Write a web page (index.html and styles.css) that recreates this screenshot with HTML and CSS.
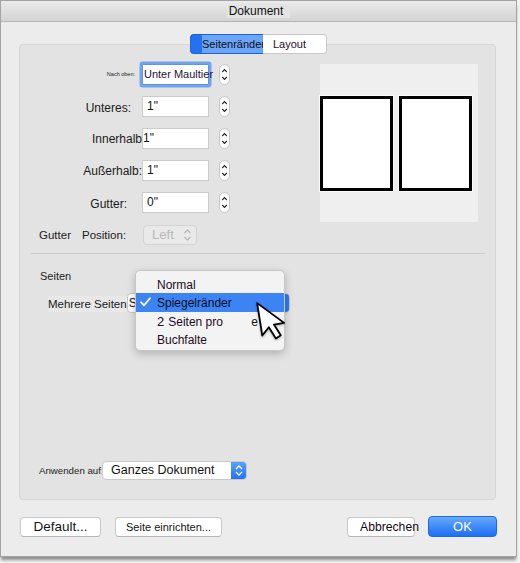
FILE: index.html
```html
<!DOCTYPE html>
<html lang="de">
<head>
<meta charset="utf-8">
<title>Dokument</title>
<link rel="stylesheet" href="styles.css">
</head>
<body>
<div class="window">
  <header class="titlebar"><span class="title">Dokument</span></header>
  <main class="content">
    <nav class="tabs">
      <span class="tab tab-active"><span class="tab-label">Seitenränder</span></span>
      <span class="tab tab-plain">Layout</span>
    </nav>

    <section class="panel">
      <div class="margins">
        <div class="fields">
          <div class="field">
            <span class="label label-top">Nach oben:</span>
            <span class="input input-focus">Unter Maultier</span>
            <svg class="stepper" viewBox="0 0 11 21" width="11" height="21"><rect x="0.5" y="0.5" width="10" height="20" rx="5" fill="#fff" stroke="#c4c4c4"/><polyline points="3.2,8 5.5,5.6 7.8,8" fill="none" stroke="#262626" stroke-width="1.1"/><polyline points="3.2,13 5.5,15.4 7.8,13" fill="none" stroke="#262626" stroke-width="1.1"/></svg>
          </div>
          <div class="field">
            <span class="label label-bottom">Unteres:</span>
            <span class="input">1"</span>
            <svg class="stepper" viewBox="0 0 11 21" width="11" height="21"><rect x="0.5" y="0.5" width="10" height="20" rx="5" fill="#fff" stroke="#c4c4c4"/><polyline points="3.2,8 5.5,5.6 7.8,8" fill="none" stroke="#262626" stroke-width="1.1"/><polyline points="3.2,13 5.5,15.4 7.8,13" fill="none" stroke="#262626" stroke-width="1.1"/></svg>
          </div>
          <div class="field">
            <span class="label">Innerhalb</span>
            <span class="input input-flush">1"</span>
            <svg class="stepper" viewBox="0 0 11 21" width="11" height="21"><rect x="0.5" y="0.5" width="10" height="20" rx="5" fill="#fff" stroke="#c4c4c4"/><polyline points="3.2,8 5.5,5.6 7.8,8" fill="none" stroke="#262626" stroke-width="1.1"/><polyline points="3.2,13 5.5,15.4 7.8,13" fill="none" stroke="#262626" stroke-width="1.1"/></svg>
          </div>
          <div class="field">
            <span class="label">Außerhalb:</span>
            <span class="input">1"</span>
            <svg class="stepper" viewBox="0 0 11 21" width="11" height="21"><rect x="0.5" y="0.5" width="10" height="20" rx="5" fill="#fff" stroke="#c4c4c4"/><polyline points="3.2,8 5.5,5.6 7.8,8" fill="none" stroke="#262626" stroke-width="1.1"/><polyline points="3.2,13 5.5,15.4 7.8,13" fill="none" stroke="#262626" stroke-width="1.1"/></svg>
          </div>
          <div class="field">
            <span class="label label-gutter">Gutter:</span>
            <span class="input">0"</span>
            <svg class="stepper" viewBox="0 0 11 21" width="11" height="21"><rect x="0.5" y="0.5" width="10" height="20" rx="5" fill="#fff" stroke="#c4c4c4"/><polyline points="3.2,8 5.5,5.6 7.8,8" fill="none" stroke="#262626" stroke-width="1.1"/><polyline points="3.2,13 5.5,15.4 7.8,13" fill="none" stroke="#262626" stroke-width="1.1"/></svg>
          </div>
          <div class="field">
            <span class="gutter-word">Gutter</span>
            <span class="gutter-pos">Position:</span>
            <span class="select-off">
              <span class="select-off-text">Left</span>
              <svg viewBox="0 0 9 14" width="9" height="14"><polyline points="1.5,5 4.5,2 7.5,5" fill="none" stroke="#b4b4b4" stroke-width="1.2"/><polyline points="1.5,9 4.5,12 7.5,9" fill="none" stroke="#b4b4b4" stroke-width="1.2"/></svg>
            </span>
          </div>
        </div>

        <div class="preview">
          <div class="page"></div>
          <div class="page"></div>
        </div>
      </div>

      <div class="divider"></div>

      <div class="pages-title">Seiten</div>
      <div class="pages-row">
        <span class="pages-label">Mehrere Seiten</span>
        <span class="popup">
          <span class="popup-text">S</span>
          <span class="popup-cap"></span>
        </span>
      </div>

      <ul class="menu">
        <li class="menu-item menu-first">Normal</li>
        <li class="menu-item menu-selected">
          <svg class="check" viewBox="0 0 11 10" width="11" height="10"><polyline points="1,5.2 4,8.4 10,1.2" fill="none" stroke="#fff" stroke-width="1.7" stroke-linecap="round" stroke-linejoin="round"/></svg>
          Spiegelränder
        </li>
        <li class="menu-item menu-third"><span class="num">2</span>Seiten pro<span class="stray">e</span></li>
        <li class="menu-item menu-last">Buchfalte</li>
      </ul>

      <svg class="cursor" viewBox="-1.5 -1.5 16 22" width="33.6" height="46.2">
        <g transform="rotate(-9)">
          <path d="M0,0 L0,15.6 L3.7,12.2 L6.2,18 L8.7,16.9 L6.3,11.3 L11.2,11.3 Z" fill="#fff" stroke="#000" stroke-width="0.85" stroke-linejoin="round"/>
        </g>
      </svg>

      <div class="apply">
        <span class="apply-label">Anwenden auf:</span>
        <span class="select">
          <span class="select-text">Ganzes Dokument</span>
          <span class="select-cap">
            <svg viewBox="0 0 16 19" width="16" height="19"><polyline points="5,8 8,5 11,8" fill="none" stroke="#fff" stroke-width="1.3"/><polyline points="5,11 8,14 11,11" fill="none" stroke="#fff" stroke-width="1.3"/></svg>
          </span>
        </span>
      </div>
    </section>

    <footer class="buttons">
      <span class="btn btn-default">Default...</span>
      <span class="btn btn-setup">Seite einrichten...</span>
      <span class="btn btn-cancel">Abbrechen</span>
      <span class="btn btn-ok">OK</span>
    </footer>
  </main>
</div>
</body>
</html>
```

FILE: styles.css
```css
* {
  box-sizing: border-box;
}

html,
body {
  margin: 0;
  padding: 0;
}

body {
  width: 520px;
  height: 563px;
  overflow: hidden;
  background: #f3f3f3;
  font-family: "Liberation Sans", Arial, sans-serif;
  color: #1b1b1b;
}

/* Dialog window */
.window {
  width: 517px;
  height: 557px;
  display: flex;
  flex-direction: column;
  background: #ececec;
  border: 1px solid #a3a3a3;
  box-shadow: 0 4px 3px -1px rgba(0, 0, 0, 0.42);
}

.titlebar {
  flex: none;
  height: 21px;
  display: flex;
  align-items: center;
  justify-content: center;
  background: linear-gradient(#ebebeb, #d3d3d3);
  border-bottom: 1px solid #b4b4b4;
}

.title {
  font-size: 12px;
  line-height: 13px;
  padding: 1px 7px 0 2px;
  background: #e4e4e4;
  color: #111;
}

.content {
  flex: 1;
  display: flex;
  flex-direction: column;
}

/* Segmented tab control */
.tabs {
  align-self: flex-start;
  display: flex;
  height: 20px;
  margin: 12px 0 -10px 189px;
  position: relative;
  z-index: 1;
}

.tab {
  height: 20px;
  font-size: 11px;
  line-height: 18px;
  white-space: nowrap;
  color: #1a0f1e;
}

.tab-active {
  width: 73px;
  padding-left: 11px;
  background: #2472ef;
  border: 1px solid #1d62d8;
  border-right: none;
  border-radius: 4px 0 0 4px;
}

.tab-label {
  display: block;
  background: #6aa5f8;
  color: #0d0d12;
}

.tab-plain {
  width: 64px;
  padding-left: 10px;
  background: #fff;
  border: 1px solid #c8c8c8;
  border-left: none;
  border-radius: 0 4px 4px 0;
  color: #2a0b2a;
}

/* Group box */
.panel {
  position: relative;
  height: 456px;
  margin: 0 20px 0 18px;
  padding-bottom: 19px;
  display: flex;
  flex-direction: column;
  background: #e3e3e3;
  border: 1px solid #d6d6d6;
  border-radius: 4px;
}

.margins {
  display: flex;
  padding-top: 19px;
}

.fields {
  width: 300px;
  display: flex;
  flex-direction: column;
  gap: 11px;
}

.field {
  height: 21px;
  display: flex;
  align-items: center;
}

.label {
  width: 122px;
  flex: none;
  text-align: right;
  font-size: 12px;
  white-space: nowrap;
}

.label-top {
  font-size: 5.5px;
  padding-right: 7px;
  padding-bottom: 1px;
}

.label-bottom {
  padding-right: 11px;
  padding-top: 3px;
}

.label-gutter {
  padding-right: 15px;
  padding-top: 2px;
}

.input {
  width: 67px;
  height: 21px;
  flex: none;
  padding-left: 4px;
  background: #fff;
  border: 1px solid #cacaca;
  font-size: 12px;
  line-height: 19px;
  white-space: nowrap;
  color: #111;
}

.input-focus {
  padding-left: 1px;
  font-size: 11px;
  border-color: #5d95e8;
  border-radius: 1px;
  box-shadow: 0 0 0 2.5px #73a5ee;
  color: #2a1238;
}

.input-flush {
  padding-left: 0;
}

.stepper {
  display: block;
  flex: none;
  margin-left: 10px;
}

.gutter-word {
  margin-left: 19px;
  font-size: 11.5px;
}

.gutter-pos {
  margin-left: 11px;
  font-size: 11.5px;
}

.select-off {
  width: 54px;
  height: 20px;
  margin-left: 17px;
  padding: 0 4px 0 8px;
  display: flex;
  align-items: center;
  justify-content: space-between;
  background: #e9e9e9;
  border: 1px solid #d3d3d3;
  border-radius: 4px;
}

.select-off-text {
  font-size: 13px;
  color: #b8b8b8;
}

.select-off svg {
  display: block;
}

/* Page preview */
.preview {
  width: 158px;
  height: 158px;
  display: flex;
  align-items: center;
  gap: 6px;
  background: #efefef;
}

.page {
  width: 73px;
  height: 95px;
  background: #fff;
  border: 3px solid #000;
  box-shadow: 0 0 0 1px #fafafa;
}

.divider {
  height: 1px;
  margin: 8px 10px 0 11px;
  background: #cdcdcd;
}

/* Pages section */
.pages-title {
  margin: 16px 0 0 20px;
  font-size: 11px;
  line-height: 13px;
}

.pages-row {
  display: flex;
  align-items: flex-start;
  margin-top: 10px;
}

.pages-label {
  margin: 3px 0 0 28px;
  font-size: 11.5px;
  line-height: 16px;
  background: #e8e8e8;
  white-space: nowrap;
}

.popup {
  width: 163px;
  height: 20px;
  display: flex;
  background: #fff;
  border: 1px solid #c8c8c8;
  border-radius: 4px;
  overflow: hidden;
}

.popup-text {
  flex: 1;
  padding-left: 1px;
  font-size: 12px;
  line-height: 18px;
  white-space: nowrap;
  overflow: hidden;
}

.popup-cap {
  width: 17px;
  background: #3179ee;
}

/* Open popup menu */
.menu {
  position: absolute;
  left: 115px;
  top: 225px;
  width: 150px;
  margin: 0;
  padding: 6px 0 2px;
  list-style: none;
  background: #f3f3f3;
  border: 1px solid #c6c6c6;
  border-radius: 5px;
  box-shadow: 0 3px 9px rgba(0, 0, 0, 0.22);
  z-index: 2;
}

.menu-item {
  display: flex;
  align-items: center;
  padding-left: 21px;
  font-size: 12px;
  white-space: nowrap;
  color: #1c0d1c;
}

.menu-first {
  height: 16px;
}

.menu-selected {
  position: relative;
  height: 19px;
  background: #3c84f4;
  color: #0c0c18;
}

.check {
  position: absolute;
  left: 4px;
  top: 4px;
}

.menu-third {
  height: 19px;
}

.num {
  margin-right: 4px;
  font-size: 13px;
}

.stray {
  margin-left: auto;
  margin-right: 26px;
  font-size: 12px;
}

.menu-last {
  height: 17px;
}

.cursor {
  position: absolute;
  left: 234px;
  top: 255px;
  z-index: 3;
  filter: drop-shadow(0 1px 1px rgba(0, 0, 0, 0.3));
}

/* Apply-to row */
.apply {
  margin-top: auto;
  height: 19px;
  padding-left: 19px;
  display: flex;
  align-items: center;
}

.apply-label {
  width: 63px;
  flex: none;
  font-size: 9.7px;
  white-space: nowrap;
}

.select {
  width: 145px;
  height: 19px;
  display: flex;
  background: #fff;
  border: 1px solid #c9c9c9;
  border-radius: 4px;
  overflow: hidden;
}

.select-text {
  flex: 1;
  padding-left: 8px;
  font-size: 12.5px;
  line-height: 17px;
  white-space: nowrap;
  color: #111;
}

.select-cap {
  width: 16px;
  margin: -1px -1px -1px 0;
  background: linear-gradient(#5ea3fa, #1f71f2);
  border-radius: 0 4px 4px 0;
}

.select-cap svg {
  display: block;
}

/* Footer buttons */
.buttons {
  height: 21px;
  margin-top: 16px;
  padding: 0 19px;
  display: flex;
  align-items: center;
}

.btn {
  height: 20px;
  display: flex;
  align-items: center;
  justify-content: center;
  background: #fff;
  border: 1px solid #c8c8c8;
  border-bottom-color: #b4b4b4;
  border-radius: 4px;
  white-space: nowrap;
  color: #151515;
}

.btn-default {
  width: 81px;
  font-size: 13.5px;
}

.btn-setup {
  width: 107px;
  margin-left: 14px;
  font-size: 11px;
}

.btn-cancel {
  width: 68px;
  margin-left: auto;
  padding-left: 12px;
  justify-content: flex-start;
  font-size: 12.2px;
  color: #14091a;
}

.btn-ok {
  width: 69px;
  height: 21px;
  margin-left: 13px;
  font-size: 13px;
  color: #fff;
  background: linear-gradient(#66a8fb, #1c6ff4);
  border-color: #1b69e6;
}
```
